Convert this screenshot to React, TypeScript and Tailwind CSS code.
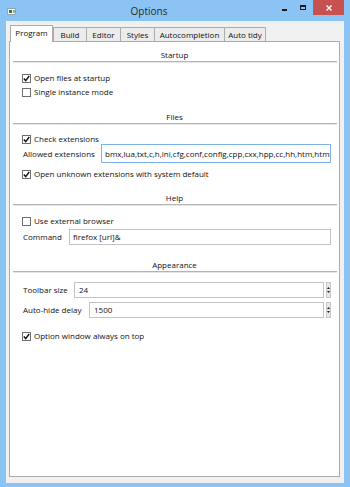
import React from 'react'

const tabs = [
  { label: 'Program', w: 'w-[43px]', active: true },
  { label: 'Build', w: 'w-[34px]' },
  { label: 'Editor', w: 'w-[35px]' },
  { label: 'Styles', w: 'w-[35px]' },
  { label: 'Autocompletion', w: 'w-[71px]' },
  { label: 'Auto tidy', w: 'w-[42px]' },
]

function Section({ title, className }: { title: string; className: string }) {
  return (
    <div className={className}>
      <div className="h-[12px] text-center leading-[12px]">{title}</div>
      <div className="ml-[3px] mr-[2px] h-px bg-[#b4b4b4]" />
      <div className="ml-[3px] mr-[2px] h-px bg-[#e6e6e6]" />
    </div>
  )
}

function CheckRow({ label, checked, className = '' }: { label: string; checked?: boolean; className?: string }) {
  return (
    <div className={`flex h-[12px] items-center pl-[12px] ${className}`}>
      <div className="flex h-[9px] w-[9px] items-center justify-center border border-[#6f6f6f] bg-white">
        {checked && (
          <svg width="7" height="7" viewBox="0 0 7 7">
            <path d="M0.8 3.6 L2.7 5.6 L6.2 1" fill="none" stroke="#111" strokeWidth="1.4" />
          </svg>
        )}
      </div>
      <span className="ml-[3px] leading-[12px]">{label}</span>
    </div>
  )
}

function SpinArrows() {
  return (
    <div className="ml-[2px] flex h-full w-[5px] flex-col items-center justify-center gap-[2px] border border-[#c8c8c8] bg-[#e8e8e8]">
      <svg width="3" height="2" viewBox="0 0 3 2">
        <path d="M0 2 L1.5 0 L3 2 Z" fill="#222" />
      </svg>
      <svg width="3" height="2" viewBox="0 0 3 2">
        <path d="M0 0 L3 0 L1.5 2 Z" fill="#222" />
      </svg>
    </div>
  )
}

export default function App() {
  return (
    <div className="flex h-[487px] w-[350px] flex-col bg-[#8bc3f4] font-['Open_Sans',sans-serif] text-[8px] text-[#111]">
      {/* Title bar */}
      <div className="relative flex h-[21px] items-start">
        <div className="ml-[7px] mt-[8px] flex h-[7px] w-[9px] items-center border border-[#9aa4ae] bg-[#f4f4f4] pl-px">
          <div className="h-[3px] w-[3px] bg-[#2f7d4a]" />
          <div className="ml-px h-[3px] w-[2px] bg-[#7bb88f]" />
        </div>
        <div className="flex-1 pt-[4px] text-center text-[10px] leading-[14px] text-[#2a2a2a]">Options</div>
        <div className="flex items-start">
          <div className="mt-[9px] h-[2px] w-[5px] bg-[#1a1a1a]" />
          <div className="ml-[13px] mt-[5px] h-[5px] w-[6px] border border-t-2 border-[#1a1a1a]" />
          <div className="ml-[7px] mr-[6px] flex h-[15px] w-[31px] items-center justify-center bg-[#c75050]">
            <svg width="6" height="6" viewBox="0 0 6 6">
              <path d="M0.5 0.5 L5.5 5.5 M5.5 0.5 L0.5 5.5" stroke="#fff" strokeWidth="1.4" />
            </svg>
          </div>
        </div>
      </div>

      {/* Client area */}
      <div className="mb-[4px] ml-[6px] mr-[6px] flex flex-1 flex-col bg-[#f0f0f0] pb-[6px] pl-[3px] pr-[4px] pt-[4px]">
        <div className="relative z-10 -mb-px flex h-[17px] items-end pl-px">
          {tabs.map((t, i) =>
            t.active ? (
              <div
                key={t.label}
                className={`${t.w} flex h-[17px] items-start justify-center border border-b-0 border-[#acacac] bg-white pt-[1px] leading-[12px]`}
              >
                {t.label}
              </div>
            ) : (
              <div
                key={t.label}
                className={`${t.w} ${i > 1 ? '-ml-px' : ''} mb-px flex h-[14px] items-center justify-center border border-b-0 border-[#acacac] bg-[#ececec] leading-[12px]`}
              >
                {t.label}
              </div>
            )
          )}
        </div>

        <div className="flex flex-1 flex-col border border-[#acacac] bg-white">
          <Section title="Startup" className="mt-[7px]" />
          <CheckRow label="Open files at startup" checked className="mt-[9px]" />
          <CheckRow label="Single instance mode" className="mt-[2px]" />

          <Section title="Files" className="mt-[13px]" />
          <CheckRow label="Check extensions" checked className="mt-[8px]" />
          <div className="-mt-px flex h-[19px] items-center pl-[13px] pr-[8px]">
            <span className="w-[78px] shrink-0 leading-[12px]">Allowed extensions</span>
            <div className="flex h-full min-w-0 flex-1 items-center overflow-hidden whitespace-nowrap border border-[#7eb4ea] bg-white pl-[3px]">
              bmx,lua,txt,c,h,ini,cfg,conf,config,cpp,cxx,hpp,cc,hh,htm,html
            </div>
          </div>
          <CheckRow label="Open unknown extensions with system default" checked className="mt-[5px]" />

          <Section title="Help" className="mt-[12px]" />
          <CheckRow label="Use external browser" className="mt-[9px]" />
          <div className="mt-[2px] flex h-[16px] items-center pl-[13px] pr-[8px]">
            <span className="w-[46px] shrink-0 leading-[12px]">Command</span>
            <div className="flex h-full flex-1 items-center border border-[#c3c3c3] bg-white pl-[3px]">firefox [url]&amp;</div>
          </div>

          <Section title="Appearance" className="mt-[14px]" />
          <div className="mt-[9px] flex h-[16px] items-center pl-[13px] pr-[8px]">
            <span className="w-[51px] shrink-0 leading-[12px]">Toolbar size</span>
            <div className="flex h-full flex-1 items-center border border-[#c3c3c3] bg-white pl-[4px]">24</div>
            <SpinArrows />
          </div>
          <div className="mt-[4px] flex h-[16px] items-center pl-[13px] pr-[8px]">
            <span className="w-[66px] shrink-0 leading-[12px]">Auto-hide delay</span>
            <div className="flex h-full flex-1 items-center border border-[#c3c3c3] bg-white pl-[4px]">1500</div>
            <SpinArrows />
          </div>
          <CheckRow label="Option window always on top" checked className="mt-[12px]" />
        </div>
      </div>
    </div>
  )
}
